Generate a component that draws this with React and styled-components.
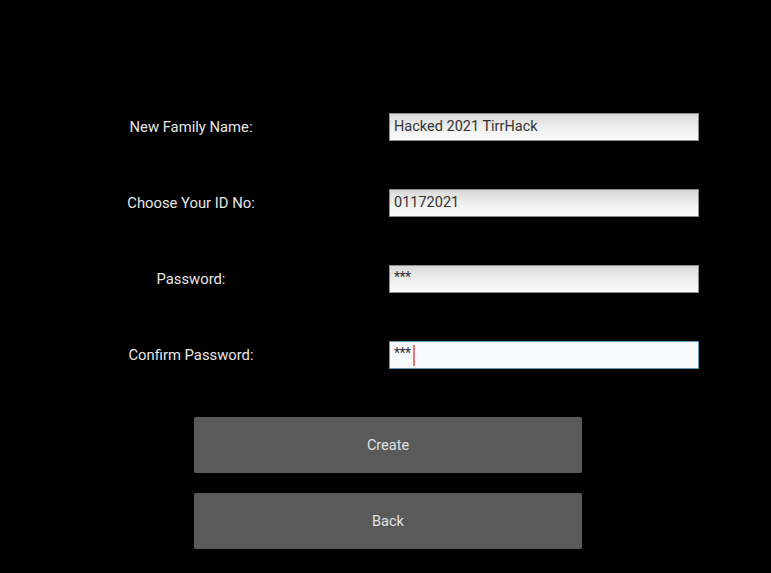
import {createGlobalStyle, styled} from "styled-components";

const GlobalStyle = createGlobalStyle`
    html, body {
        margin: 0;
        padding: 0;
        background: #000;
    }
    body {
        font-family: Roboto, "Noto Sans", "Liberation Sans", sans-serif;
    }
`

const fields = [
  {label: "New Family Name:", value: "Hacked 2021 TirrHack"},
  {label: "Choose Your ID No:", value: "01172021"},
  {label: "Password:", value: "***"},
  {label: "Confirm Password:", value: "***", focused: true},
];

const App = () => {
  return (
      <>
        <GlobalStyle/>
        <Screen>
          <Form>
            {fields.map((f) => (
                <Row key={f.label}>
                  <Label>{f.label}</Label>
                  <Field $focused={f.focused}>
                    <Value $masked={f.value === "***"}>{f.value}</Value>
                    {f.focused && <Caret/>}
                  </Field>
                </Row>
            ))}
          </Form>
          <Actions>
            <Button>Create</Button>
            <Button>Back</Button>
          </Actions>
        </Screen>
      </>
  );
};

export default App;

const Screen = styled.div`
    width: 771px;
    height: 573px;
    background: #000;
    box-sizing: border-box;
    padding-top: 113px;
    overflow: hidden;
`

const Form = styled.div`
    display: flex;
    flex-direction: column;
    gap: 48px;
`

const Row = styled.div`
    display: grid;
    grid-template-columns: 382px 310px;
    column-gap: 7px;
    align-items: center;
    height: 28px;
`

const Label = styled.span`
    text-align: center;
    color: #e6e6e6;
    font-size: 14.8px;
    line-height: 28px;
`

const Field = styled.div`
    display: flex;
    align-items: center;
    height: 28px;
    box-sizing: border-box;
    padding: 0 4px;
    border: 1px solid ${({$focused}) => ($focused ? "#5f9ab8" : "#8c8c8c")};
    background: ${({$focused}) =>
        $focused ? "#f7f9fa" : "linear-gradient(to bottom, #d9d9d9 0%, #f1f1f1 60%, #fbfbfb 100%)"};
`

const Value = styled.span`
    color: #333;
    font-size: ${({$masked}) => ($masked ? "14px" : "14.5px")};
    letter-spacing: ${({$masked}) => ($masked ? "-0.5px" : "0")};
    line-height: 1;
    margin-top: ${({$masked}) => ($masked ? "-4px" : "0")};
`

const Caret = styled.span`
    display: inline-block;
    width: 2px;
    height: 21px;
    margin-left: 2px;
    background: #f07474;
`

const Actions = styled.div`
    display: flex;
    flex-direction: column;
    gap: 20px;
    margin: 48px 0 0 194px;
    width: 388px;
`

const Button = styled.button`
    height: 56px;
    border: none;
    border-radius: 2px;
    background: #5a5a5a;
    color: #e2e2e2;
    font-family: inherit;
    font-size: 14.5px;
    cursor: pointer;
`
